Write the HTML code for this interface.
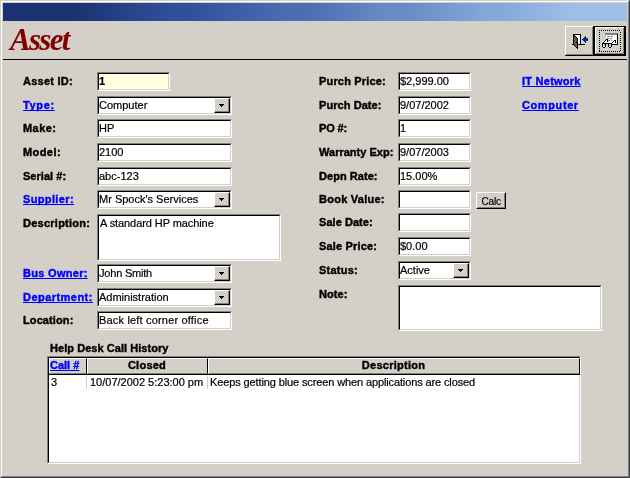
<!DOCTYPE html>
<html><head><meta charset="utf-8">
<style>
*{margin:0;padding:0;box-sizing:border-box}
html,body{width:630px;height:478px;overflow:hidden;background:#d4d0c8}
body{position:relative;will-change:transform;-webkit-text-stroke:0.2px currentColor;font-family:"Liberation Sans",sans-serif;font-size:11px;color:#000}
.a{position:absolute}
.win{position:absolute;left:0;top:0;width:630px;height:478px;border-style:solid;border-width:1px;border-color:#d4d0c8 #404040 #404040 #d4d0c8}
.win2{position:absolute;left:1px;top:1px;width:628px;height:476px;border-style:solid;border-width:1px;border-color:#fff #808080 #808080 #fff}
.hdr{position:absolute;left:3px;top:3px;width:624px;height:18px;background:linear-gradient(to right,#1a3272 0px,#1a3272 72px,#30509c 169px,#30509c 187px,#4a6cb2 280px,#4a6cb2 302px,#6a8cc6 387px,#6a8cc6 407px,#84a8da 484px,#84a8da 497px,#9cbfe6 570px,#9cbfe6 624px)}
.title{position:absolute;left:10px;top:22px;font-family:"Liberation Serif",serif;font-weight:bold;font-style:italic;font-size:31px;letter-spacing:-1.7px;color:#800000;line-height:36px;-webkit-text-stroke:0;white-space:nowrap}
.rule{position:absolute;left:3px;top:59px;width:624px;height:1px;background:#000}
.l{position:absolute;font-weight:bold;line-height:13px;white-space:nowrap;-webkit-text-stroke:0.4px currentColor;letter-spacing:0.25px}
.lk{color:#0000ff;text-decoration:underline;text-decoration-skip-ink:none}
.tb{position:absolute;height:19px;border:1px solid;border-color:#808080 #fff #fff #808080}
.tb>.i{position:absolute;left:0;top:0;right:0;bottom:0;border:1px solid;border-color:#000 #d4d0c8 #d4d0c8 #000;background:#fff;padding-left:0;padding-top:1px;line-height:13px;white-space:nowrap;overflow:hidden}
.btn{position:absolute;top:0;right:0;width:16px;height:15px;background:#d4d0c8;border-style:solid;border-width:1px;border-color:#fff #000 #000 #fff}
.btn>.s{position:absolute;left:0;top:0;right:0;bottom:0;border-style:solid;border-width:0 1px 1px 0;border-color:#808080}
.hc{position:absolute;top:0;height:16px;border-style:solid;border-width:1px;border-color:#fff #000 #808080 #fff}
.arr{position:absolute;left:4px;top:5px;shape-rendering:crispEdges}
</style></head><body>
<div class="win"></div><div class="win2"></div>
<div class="hdr"></div>
<div class="title">Asset</div>
<div class="rule"></div>
<!--TB--><svg class="a" style="left:565px;top:26px" width="61" height="30" shape-rendering="crispEdges"><rect x="0" y="0" width="29" height="30" fill="#d4d0c8"/><rect x="0" y="0" width="28" height="1" fill="#fff"/><rect x="0" y="0" width="1" height="29" fill="#fff"/><rect x="28" y="0" width="1" height="30" fill="#000"/><rect x="0" y="29" width="29" height="1" fill="#000"/><rect x="27" y="1" width="1" height="28" fill="#808080"/><rect x="1" y="28" width="27" height="1" fill="#808080"/><rect x="8" y="8" width="8" height="1" fill="#000"/><rect x="8" y="9" width="2" height="1" fill="#000"/><rect x="10" y="9" width="5" height="1" fill="#fff"/><rect x="15" y="9" width="1" height="1" fill="#000"/><rect x="8" y="10" width="1" height="1" fill="#000"/><rect x="9" y="10" width="1" height="1" fill="#5a5a5a"/><rect x="10" y="10" width="1" height="1" fill="#000"/><rect x="11" y="10" width="4" height="1" fill="#fff"/><rect x="15" y="10" width="1" height="1" fill="#000"/><rect x="20" y="10" width="1" height="1" fill="#0c2c84"/><rect x="8" y="11" width="1" height="1" fill="#000"/><rect x="9" y="11" width="2" height="1" fill="#5a5a5a"/><rect x="11" y="11" width="1" height="1" fill="#000"/><rect x="12" y="11" width="3" height="1" fill="#fff"/><rect x="15" y="11" width="1" height="1" fill="#000"/><rect x="19" y="11" width="2" height="1" fill="#0c2c84"/><rect x="8" y="12" width="1" height="1" fill="#000"/><rect x="9" y="12" width="3" height="1" fill="#5a5a5a"/><rect x="12" y="12" width="1" height="1" fill="#000"/><rect x="13" y="12" width="2" height="1" fill="#fff"/><rect x="15" y="12" width="1" height="1" fill="#000"/><rect x="18" y="12" width="5" height="1" fill="#0c2c84"/><rect x="8" y="13" width="1" height="1" fill="#000"/><rect x="9" y="13" width="3" height="1" fill="#5a5a5a"/><rect x="12" y="13" width="1" height="1" fill="#000"/><rect x="13" y="13" width="2" height="1" fill="#fff"/><rect x="15" y="13" width="1" height="1" fill="#000"/><rect x="17" y="13" width="6" height="1" fill="#0c2c84"/><rect x="8" y="14" width="1" height="1" fill="#000"/><rect x="9" y="14" width="3" height="1" fill="#5a5a5a"/><rect x="12" y="14" width="1" height="1" fill="#000"/><rect x="13" y="14" width="2" height="1" fill="#fff"/><rect x="15" y="14" width="1" height="1" fill="#000"/><rect x="18" y="14" width="5" height="1" fill="#0c2c84"/><rect x="8" y="15" width="1" height="1" fill="#000"/><rect x="9" y="15" width="3" height="1" fill="#5a5a5a"/><rect x="12" y="15" width="1" height="1" fill="#000"/><rect x="13" y="15" width="2" height="1" fill="#fff"/><rect x="15" y="15" width="1" height="1" fill="#000"/><rect x="19" y="15" width="2" height="1" fill="#0c2c84"/><rect x="8" y="16" width="1" height="1" fill="#000"/><rect x="9" y="16" width="2" height="1" fill="#5a5a5a"/><rect x="11" y="16" width="2" height="1" fill="#000"/><rect x="13" y="16" width="2" height="1" fill="#fff"/><rect x="15" y="16" width="1" height="1" fill="#000"/><rect x="20" y="16" width="1" height="1" fill="#0c2c84"/><rect x="8" y="17" width="1" height="1" fill="#000"/><rect x="9" y="17" width="3" height="1" fill="#5a5a5a"/><rect x="12" y="17" width="1" height="1" fill="#000"/><rect x="13" y="17" width="2" height="1" fill="#fff"/><rect x="15" y="17" width="1" height="1" fill="#000"/><rect x="7" y="18" width="2" height="1" fill="#000"/><rect x="9" y="18" width="3" height="1" fill="#5a5a5a"/><rect x="12" y="18" width="8" height="1" fill="#000"/><rect x="9" y="19" width="1" height="1" fill="#000"/><rect x="10" y="19" width="2" height="1" fill="#5a5a5a"/><rect x="12" y="19" width="1" height="1" fill="#000"/><rect x="10" y="20" width="1" height="1" fill="#000"/><rect x="11" y="20" width="1" height="1" fill="#5a5a5a"/><rect x="12" y="20" width="1" height="1" fill="#000"/><rect x="11" y="21" width="2" height="1" fill="#000"/><rect x="12" y="22" width="1" height="1" fill="#000"/><rect x="29" y="0" width="32" height="30" fill="#000"/><rect x="30" y="1" width="30" height="28" fill="#d4d0c8"/><rect x="30" y="1" width="29" height="1" fill="#fff"/><rect x="30" y="1" width="1" height="27" fill="#fff"/><rect x="59" y="1" width="1" height="28" fill="#000"/><rect x="30" y="28" width="30" height="1" fill="#000"/><rect x="58" y="2" width="1" height="26" fill="#808080"/><rect x="31" y="27" width="28" height="1" fill="#808080"/><rect x="34" y="4" width="1" height="1" fill="#000"/><rect x="34" y="25" width="1" height="1" fill="#000"/><rect x="36" y="4" width="1" height="1" fill="#000"/><rect x="36" y="25" width="1" height="1" fill="#000"/><rect x="38" y="4" width="1" height="1" fill="#000"/><rect x="38" y="25" width="1" height="1" fill="#000"/><rect x="40" y="4" width="1" height="1" fill="#000"/><rect x="40" y="25" width="1" height="1" fill="#000"/><rect x="42" y="4" width="1" height="1" fill="#000"/><rect x="42" y="25" width="1" height="1" fill="#000"/><rect x="44" y="4" width="1" height="1" fill="#000"/><rect x="44" y="25" width="1" height="1" fill="#000"/><rect x="46" y="4" width="1" height="1" fill="#000"/><rect x="46" y="25" width="1" height="1" fill="#000"/><rect x="48" y="4" width="1" height="1" fill="#000"/><rect x="48" y="25" width="1" height="1" fill="#000"/><rect x="50" y="4" width="1" height="1" fill="#000"/><rect x="50" y="25" width="1" height="1" fill="#000"/><rect x="52" y="4" width="1" height="1" fill="#000"/><rect x="52" y="25" width="1" height="1" fill="#000"/><rect x="54" y="4" width="1" height="1" fill="#000"/><rect x="54" y="25" width="1" height="1" fill="#000"/><rect x="34" y="6" width="1" height="1" fill="#000"/><rect x="55" y="6" width="1" height="1" fill="#000"/><rect x="34" y="8" width="1" height="1" fill="#000"/><rect x="55" y="8" width="1" height="1" fill="#000"/><rect x="34" y="10" width="1" height="1" fill="#000"/><rect x="55" y="10" width="1" height="1" fill="#000"/><rect x="34" y="12" width="1" height="1" fill="#000"/><rect x="55" y="12" width="1" height="1" fill="#000"/><rect x="34" y="14" width="1" height="1" fill="#000"/><rect x="55" y="14" width="1" height="1" fill="#000"/><rect x="34" y="16" width="1" height="1" fill="#000"/><rect x="55" y="16" width="1" height="1" fill="#000"/><rect x="34" y="18" width="1" height="1" fill="#000"/><rect x="55" y="18" width="1" height="1" fill="#000"/><rect x="34" y="20" width="1" height="1" fill="#000"/><rect x="55" y="20" width="1" height="1" fill="#000"/><rect x="34" y="22" width="1" height="1" fill="#000"/><rect x="55" y="22" width="1" height="1" fill="#000"/><rect x="34" y="24" width="1" height="1" fill="#000"/><rect x="55" y="24" width="1" height="1" fill="#000"/><rect x="40" y="7" width="13" height="1" fill="#808080"/><rect x="40" y="8" width="12" height="1" fill="#808080"/><rect x="52" y="8" width="1" height="1" fill="#000"/><rect x="40" y="9" width="1" height="1" fill="#c0c0c0"/><rect x="41" y="9" width="11" height="1" fill="#fff"/><rect x="52" y="9" width="1" height="1" fill="#000"/><rect x="40" y="10" width="1" height="1" fill="#c0c0c0"/><rect x="41" y="10" width="1" height="1" fill="#fff"/><rect x="42" y="10" width="3" height="1" fill="#808080"/><rect x="45" y="10" width="1" height="1" fill="#fff"/><rect x="46" y="10" width="2" height="1" fill="#808080"/><rect x="48" y="10" width="4" height="1" fill="#fff"/><rect x="52" y="10" width="1" height="1" fill="#000"/><rect x="40" y="11" width="1" height="1" fill="#c0c0c0"/><rect x="41" y="11" width="11" height="1" fill="#fff"/><rect x="52" y="11" width="1" height="1" fill="#000"/><rect x="40" y="12" width="1" height="1" fill="#c0c0c0"/><rect x="41" y="12" width="1" height="1" fill="#fff"/><rect x="42" y="12" width="2" height="1" fill="#808080"/><rect x="44" y="12" width="1" height="1" fill="#fff"/><rect x="45" y="12" width="2" height="1" fill="#808080"/><rect x="47" y="12" width="5" height="1" fill="#fff"/><rect x="52" y="12" width="1" height="1" fill="#000"/><rect x="40" y="13" width="1" height="1" fill="#c0c0c0"/><rect x="41" y="13" width="2" height="1" fill="#000"/><rect x="43" y="13" width="9" height="1" fill="#fff"/><rect x="52" y="13" width="1" height="1" fill="#000"/><rect x="40" y="14" width="1" height="1" fill="#000"/><rect x="41" y="14" width="1" height="1" fill="#fff"/><rect x="42" y="14" width="1" height="1" fill="#000"/><rect x="43" y="14" width="2" height="1" fill="#808080"/><rect x="45" y="14" width="1" height="1" fill="#fff"/><rect x="46" y="14" width="1" height="1" fill="#808080"/><rect x="47" y="14" width="2" height="1" fill="#fff"/><rect x="49" y="14" width="2" height="1" fill="#000"/><rect x="51" y="14" width="1" height="1" fill="#fff"/><rect x="52" y="14" width="1" height="1" fill="#000"/><rect x="39" y="15" width="1" height="1" fill="#000"/><rect x="40" y="15" width="2" height="1" fill="#fff"/><rect x="42" y="15" width="1" height="1" fill="#000"/><rect x="43" y="15" width="5" height="1" fill="#fff"/><rect x="48" y="15" width="1" height="1" fill="#000"/><rect x="49" y="15" width="1" height="1" fill="#fff"/><rect x="50" y="15" width="1" height="1" fill="#000"/><rect x="51" y="15" width="1" height="1" fill="#fff"/><rect x="52" y="15" width="1" height="1" fill="#000"/><rect x="38" y="16" width="1" height="1" fill="#000"/><rect x="40" y="16" width="7" height="1" fill="#fff"/><rect x="47" y="16" width="1" height="1" fill="#000"/><rect x="48" y="16" width="2" height="1" fill="#fff"/><rect x="50" y="16" width="1" height="1" fill="#000"/><rect x="51" y="16" width="1" height="1" fill="#fff"/><rect x="52" y="16" width="1" height="1" fill="#000"/><rect x="37" y="17" width="10" height="1" fill="#000"/><rect x="47" y="17" width="5" height="1" fill="#fff"/><rect x="52" y="17" width="1" height="1" fill="#000"/><rect x="37" y="18" width="1" height="1" fill="#000"/><rect x="38" y="18" width="2" height="1" fill="#a6caf0"/><rect x="40" y="18" width="1" height="1" fill="#000"/><rect x="43" y="18" width="1" height="1" fill="#000"/><rect x="44" y="18" width="2" height="1" fill="#a6caf0"/><rect x="46" y="18" width="7" height="1" fill="#000"/><rect x="37" y="19" width="1" height="1" fill="#000"/><rect x="38" y="19" width="2" height="1" fill="#a6caf0"/><rect x="40" y="19" width="1" height="1" fill="#000"/><rect x="43" y="19" width="1" height="1" fill="#000"/><rect x="44" y="19" width="2" height="1" fill="#a6caf0"/><rect x="46" y="19" width="1" height="1" fill="#000"/><rect x="37" y="20" width="1" height="1" fill="#000"/><rect x="38" y="20" width="2" height="1" fill="#fff"/><rect x="40" y="20" width="1" height="1" fill="#000"/><rect x="43" y="20" width="1" height="1" fill="#000"/><rect x="44" y="20" width="2" height="1" fill="#fff"/><rect x="46" y="20" width="1" height="1" fill="#000"/><rect x="38" y="21" width="2" height="1" fill="#000"/><rect x="44" y="21" width="2" height="1" fill="#000"/></svg><!--/TB-->

<!-- left labels -->
<div class="l" style="left:23px;top:75px">Asset ID:</div>
<div class="l lk" style="left:23px;top:99px;letter-spacing:0.65px">Type:</div>
<div class="l" style="left:23px;top:122px;letter-spacing:0.45px">Make:</div>
<div class="l" style="left:23px;top:146px;letter-spacing:0.42px">Model:</div>
<div class="l" style="left:23px;top:170px;letter-spacing:0.03px">Serial #:</div>
<div class="l lk" style="left:23px;top:193px;letter-spacing:0.36px">Supplier:</div>
<div class="l" style="left:23px;top:217px">Description:</div>
<div class="l lk" style="left:23px;top:267px;letter-spacing:0.3px">Bus Owner:</div>
<div class="l lk" style="left:23px;top:291px;letter-spacing:0.46px">Department:</div>
<div class="l" style="left:23px;top:314px;letter-spacing:0.1px">Location:</div>

<!-- left controls -->
<div class="tb" style="left:97px;top:72px;width:73px"><div class="i" style="background:#ffffe1;font-weight:bold">1</div></div>
<div class="tb" style="left:97px;top:96px;width:135px"><div class="i">Computer<div class="btn"><div class="s"></div><svg class="arr" width="5" height="3"><path d="M0 0h5v1h-1v1h-1v1h-1v-1h-1v-1h-1z"/></svg></div></div></div>
<div class="tb" style="left:97px;top:119px;width:135px"><div class="i">HP</div></div>
<div class="tb" style="left:97px;top:143px;width:135px"><div class="i">2100</div></div>
<div class="tb" style="left:97px;top:167px;width:135px"><div class="i">abc-123</div></div>
<div class="tb" style="left:97px;top:190px;width:135px"><div class="i">Mr Spock's Services<div class="btn"><div class="s"></div><svg class="arr" width="5" height="3"><path d="M0 0h5v1h-1v1h-1v1h-1v-1h-1v-1h-1z"/></svg></div></div></div>
<div class="tb" style="left:97px;top:214px;width:184px;height:47px"><div class="i" style="padding-left:1px;letter-spacing:-0.08px">A standard HP machine</div></div>
<div class="tb" style="left:97px;top:264px;width:135px"><div class="i" style="letter-spacing:-0.2px">John Smith<div class="btn"><div class="s"></div><svg class="arr" width="5" height="3"><path d="M0 0h5v1h-1v1h-1v1h-1v-1h-1v-1h-1z"/></svg></div></div></div>
<div class="tb" style="left:97px;top:288px;width:135px"><div class="i">Administration<div class="btn"><div class="s"></div><svg class="arr" width="5" height="3"><path d="M0 0h5v1h-1v1h-1v1h-1v-1h-1v-1h-1z"/></svg></div></div></div>
<div class="tb" style="left:97px;top:311px;width:135px"><div class="i" style="letter-spacing:0.18px">Back left corner office</div></div>

<!-- right labels -->
<div class="l" style="left:319px;top:75px;letter-spacing:0.17px">Purch Price:</div>
<div class="l" style="left:319px;top:99px;letter-spacing:0.07px">Purch Date:</div>
<div class="l" style="left:319px;top:122px;letter-spacing:-0.15px">PO #:</div>
<div class="l" style="left:319px;top:146px;letter-spacing:0.02px">Warranty Exp:</div>
<div class="l" style="left:319px;top:170px;letter-spacing:0.05px">Depn Rate:</div>
<div class="l" style="left:319px;top:193px">Book Value:</div>
<div class="l" style="left:319px;top:216px;letter-spacing:0.05px">Sale Date:</div>
<div class="l" style="left:319px;top:240px;letter-spacing:0.16px">Sale Price:</div>
<div class="l" style="left:319px;top:264px">Status:</div>
<div class="l" style="left:319px;top:288px;letter-spacing:0.05px">Note:</div>

<div class="l lk" style="left:522px;top:75px">IT Network</div>
<div class="l lk" style="left:522px;top:99px;letter-spacing:0.6px">Computer</div>

<!-- right controls -->
<div class="tb" style="left:398px;top:72px;width:73px"><div class="i">$2,999.00</div></div>
<div class="tb" style="left:398px;top:96px;width:73px"><div class="i">9/07/2002</div></div>
<div class="tb" style="left:398px;top:119px;width:73px"><div class="i">1</div></div>
<div class="tb" style="left:398px;top:143px;width:73px"><div class="i">9/07/2003</div></div>
<div class="tb" style="left:398px;top:167px;width:73px"><div class="i">15.00%</div></div>
<div class="tb" style="left:398px;top:190px;width:73px"><div class="i"></div></div>
<div class="tb" style="left:398px;top:213px;width:73px"><div class="i"></div></div>
<div class="tb" style="left:398px;top:237px;width:73px"><div class="i">$0.00</div></div>
<div class="tb" style="left:398px;top:261px;width:73px"><div class="i">Active<div class="btn"><div class="s"></div><svg class="arr" width="5" height="3"><path d="M0 0h5v1h-1v1h-1v1h-1v-1h-1v-1h-1z"/></svg></div></div></div>
<div class="tb" style="left:398px;top:285px;width:204px;height:46px"><div class="i"></div></div>

<!-- Calc button -->
<div class="a" style="left:476px;top:192px;width:30px;height:17px;border:1px solid;border-color:#fff #000 #000 #fff;background:#d4d0c8">
  <div class="a" style="left:0;top:0;right:0;bottom:0;border:1px solid;border-color:transparent #808080 #808080 transparent"></div>
  <div class="a" style="left:4.5px;top:2px;line-height:13px;font-size:10px;letter-spacing:-0.2px">Calc</div>
</div>

<!-- subform -->
<div class="l" style="left:50px;top:342px;letter-spacing:0.05px">Help Desk Call History</div>
<div class="tb" style="left:47px;top:356px;width:534px;height:108px"><div class="i" style="padding:0;overflow:visible">
  <div class="a" style="left:0;top:0;width:531px;height:17px;background:#d4d0c8;border-bottom:1px solid #000">
    <div class="hc" style="left:0;width:38px"></div>
    <div class="hc" style="left:38px;width:121px"></div>
    <div class="hc" style="left:159px;width:372px"></div>
    <div class="l lk" style="left:1px;top:1px;letter-spacing:0">Call #</div>
    <div class="l" style="left:38px;width:120px;top:1px;text-align:center">Closed</div>
    <div class="l" style="left:159px;width:371px;top:1px;text-align:center">Description</div>
  </div>
  <div class="a" style="left:37px;top:17px;width:1px;height:14px;background:#d4d0c8"></div>
  <div class="a" style="left:158px;top:17px;width:1px;height:14px;background:#d4d0c8"></div>
  <div class="a" style="left:2px;top:18px;line-height:13px;white-space:nowrap">3</div>
  <div class="a" style="left:41px;top:18px;line-height:13px;white-space:nowrap">10/07/2002 5:23:00 pm</div>
  <div class="a" style="left:161px;top:18px;line-height:13px;white-space:nowrap;letter-spacing:-0.12px">Keeps getting blue screen when applications are closed</div>
</div></div>

</body></html>
